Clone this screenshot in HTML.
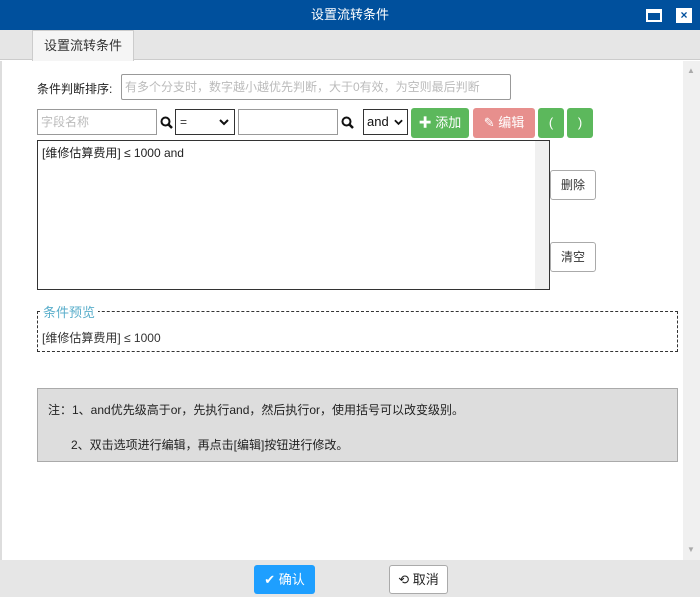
<!DOCTYPE html>
<html><head><meta charset="utf-8"><style>
*{box-sizing:border-box;margin:0;padding:0}
body{width:700px;height:597px;position:relative;overflow:hidden;font-family:"Liberation Sans","Noto Sans CJK SC",sans-serif;font-size:12px;color:#333;background:#fff}
.a{position:absolute}
.btn{position:absolute;border-radius:3px;color:#fff;font-size:13px;text-align:center;line-height:30px}
.box{position:absolute;border:1px solid #aaa;background:#fff}
</style></head><body>
<div class="a" style="left:0;top:0;width:700px;height:30px;background:#00509d;color:#fff;text-align:center;line-height:30px;font-size:13px">设置流转条件</div>
<div class="a" style="left:646px;top:9px;width:16px;height:13px;background:#fff;border:2px solid #fff;border-top-width:4px"><div style="width:100%;height:100%;background:#00509d"></div></div>
<div class="a" style="left:676px;top:8px;width:16px;height:15px;background:#fff;color:#00509d;font-weight:bold;font-size:12px;text-align:center;line-height:15px">×</div>
<div class="a" style="left:0;top:30px;width:700px;height:30px;background:#e6e6e6;border-bottom:1px solid #ccc"></div>
<div class="a" style="left:32px;top:30px;width:102px;height:31px;background:#f5f5f5;border:1px solid #ccc;border-bottom:none;text-align:center;line-height:30px;font-size:13px;color:#333">设置流转条件</div>
<div class="a" style="left:0;top:61px;width:2px;height:499px;background:#ddd"></div>
<div class="a" style="left:683px;top:61px;width:17px;height:499px;background:#f0f0f0"></div>
<div class="a" style="left:687px;top:66px;color:#aaa;font-size:8px">▲</div>
<div class="a" style="left:687px;top:545px;color:#aaa;font-size:8px">▼</div>
<div class="a" style="left:37px;top:80px;font-size:12px;color:#222">条件判断排序:</div>
<div class="box" style="left:121px;top:74px;width:390px;height:26px;border-color:#999;border-radius:2px;color:#bbb;line-height:24px;padding-left:3px">有多个分支时，数字越小越优先判断，大于0有效，为空则最后判断</div>
<div class="box" style="left:37px;top:109px;width:120px;height:26px;border-color:#999;color:#bbb;line-height:24px;padding-left:3px">字段名称</div>
<svg class="a" style="left:160px;top:116px" width="13" height="13" viewBox="0 0 13 13"><circle cx="5.5" cy="5.5" r="4" fill="none" stroke="#111" stroke-width="2"/><line x1="8.5" y1="8.5" x2="12" y2="12" stroke="#111" stroke-width="2.5"/></svg>
<div class="box" style="left:175px;top:109px;width:60px;height:26px;border-color:#333;line-height:24px;padding-left:4px">=<svg class="a" style="right:5px;top:9px" width="10" height="7" viewBox="0 0 10 7"><path d="M1 1L5 5L9 1" fill="none" stroke="#111" stroke-width="2"/></svg></div>
<div class="box" style="left:238px;top:109px;width:100px;height:26px;border-color:#999"></div>
<svg class="a" style="left:341px;top:116px" width="13" height="13" viewBox="0 0 13 13"><circle cx="5.5" cy="5.5" r="4" fill="none" stroke="#111" stroke-width="2"/><line x1="8.5" y1="8.5" x2="12" y2="12" stroke="#111" stroke-width="2.5"/></svg>
<div class="box" style="left:363px;top:109px;width:45px;height:26px;border-color:#333;line-height:24px;padding-left:3px;font-size:13px;color:#111">and<svg class="a" style="right:4px;top:9px" width="9" height="7" viewBox="0 0 10 7"><path d="M1 1L5 5L9 1" fill="none" stroke="#111" stroke-width="2"/></svg></div>
<div class="btn" style="left:411px;top:108px;width:58px;height:30px;background:#5cb85c"><b>✚</b> 添加</div>
<div class="btn" style="left:473px;top:108px;width:62px;height:30px;background:#e78f8d">✎ 编辑</div>
<div class="btn" style="left:538px;top:108px;width:26px;height:30px;background:#5cb85c">(</div>
<div class="btn" style="left:567px;top:108px;width:26px;height:30px;background:#5cb85c">)</div>
<div class="box" style="left:37px;top:140px;width:513px;height:150px;border-color:#333;padding:3px 4px;color:#222">[维修估算费用] ≤ 1000 and
<div class="a" style="right:0;top:0;width:14px;height:148px;background:#f0f0f0"></div></div>
<div class="box" style="left:550px;top:170px;width:46px;height:30px;border-color:#aaa;border-radius:3px;text-align:center;line-height:28px;color:#333">删除</div>
<div class="box" style="left:550px;top:242px;width:46px;height:30px;border-color:#aaa;border-radius:3px;text-align:center;line-height:28px;color:#333">清空</div>
<div class="a" style="left:37px;top:311px;width:641px;height:41px;border:1px dashed #333"></div>
<div class="a" style="left:40px;top:302px;background:#fff;color:#5aaecb;padding:0 3px;font-size:13px">条件预览</div>
<div class="a" style="left:42px;top:329px;color:#333">[维修估算费用] ≤ 1000</div>
<div class="a" style="left:37px;top:388px;width:641px;height:74px;background:#ddd;border:1px solid #aaa"></div>
<div class="a" style="left:48px;top:401px;color:#222">注：1、and优先级高于or，先执行and，然后执行or，使用括号可以改变级别。</div>
<div class="a" style="left:71px;top:436px;color:#222">2、双击选项进行编辑，再点击[编辑]按钮进行修改。</div>
<div class="a" style="left:0;top:560px;width:700px;height:37px;background:#e6e6e6"></div>
<div class="btn" style="left:254px;top:565px;width:61px;height:29px;background:#1e9fff;line-height:29px">✔ 确认</div>
<div class="box" style="left:389px;top:565px;width:59px;height:29px;border-color:#aaa;border-radius:3px;text-align:center;line-height:27px;color:#222;font-size:13px">⟲ 取消</div>
</body></html>
